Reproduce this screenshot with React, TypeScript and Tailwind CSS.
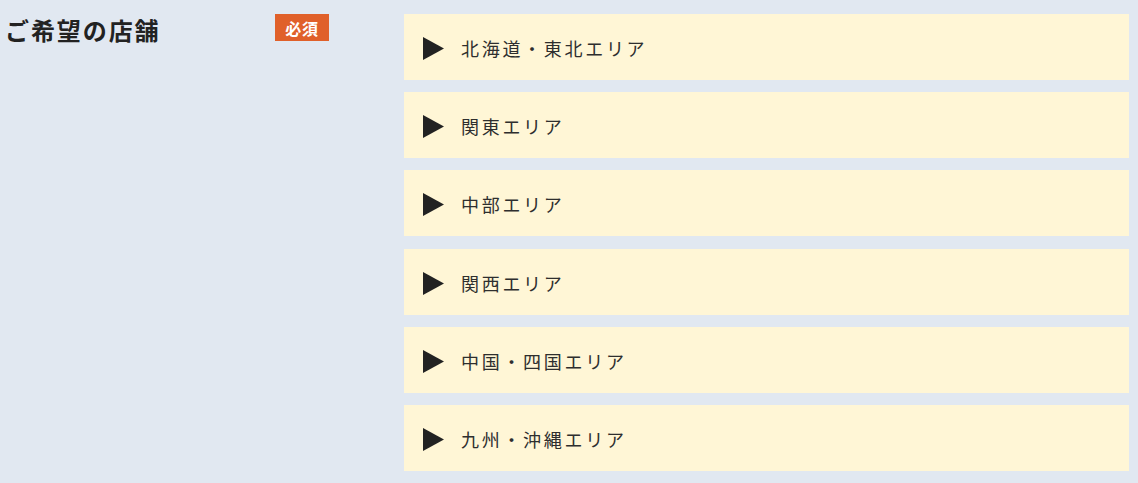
import React from 'react';

const areas = [
  '北海道・東北エリア',
  '関東エリア',
  '中部エリア',
  '関西エリア',
  '中国・四国エリア',
  '九州・沖縄エリア',
];

const Triangle: React.FC = () => (
  <svg width="21" height="23" viewBox="0 0 21 23" className="shrink-0">
    <polygon points="0,0 21,11.5 0,23" fill="#222222" />
  </svg>
);

const App: React.FC = () => {
  return (
    <div
      className="flex min-h-[483px] w-full bg-[#e1e8f1] pt-[14px] pb-[12px] pr-[9px]"
      style={{ fontFamily: '"Noto Sans CJK JP", "Noto Sans", sans-serif' }}
    >
      <div className="flex w-[404px] shrink-0 items-start pl-[5px]">
        <h2 className="mt-[2px] w-[270px] text-[24px] font-bold leading-[27px] tracking-[0.08em] text-[#222]">
          ご希望の店舗
        </h2>
        <span className="flex h-[27px] w-[54px] items-center justify-center bg-[#e0602a] text-[16px] font-bold leading-none tracking-[0.05em] text-white">
          必須
        </span>
      </div>
      <div className="flex flex-1 flex-col gap-[12.2px]">
        {areas.map((area) => (
          <div
            key={area}
            className="flex h-[66px] items-center bg-[#fff6d6] pl-[19px] pt-[3px]"
          >
            <Triangle />
            <span className="ml-[17px] text-[18px] tracking-[0.15em] text-[#2e2e2e]">
              {area}
            </span>
          </div>
        ))}
      </div>
    </div>
  );
};

export default App;
